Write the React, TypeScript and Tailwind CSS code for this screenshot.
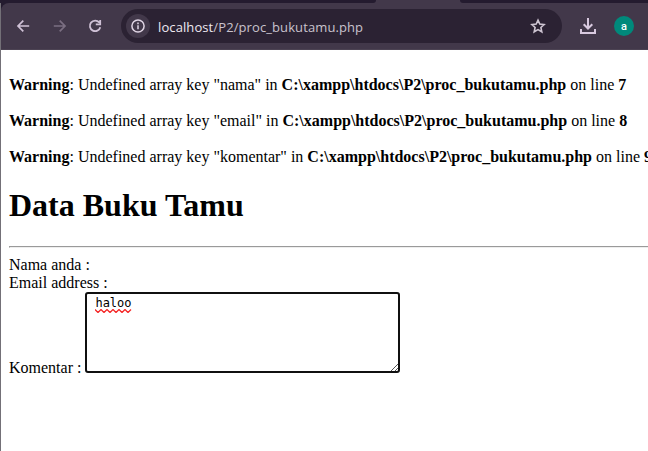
const warnings = [
  { key: 'nama', line: 7 },
  { key: 'email', line: 8 },
  { key: 'komentar', line: 9 },
];

function TabStrip() {
  return (
    <div className="flex h-[3px] justify-between bg-[#42384a]">
      <div className="w-[376px] rounded-br-[5px] bg-[#241b2f]" />
      <div className="w-[188px] rounded-bl-[5px] bg-[#241b2f]" />
    </div>
  );
}

function Toolbar() {
  return (
    <div className="bg-[#241b2f]">
      <div className="flex h-[47px] items-center rounded-tl-[8px] border-b border-[#4c4353] bg-[#42384a] pl-[15px]">
        <svg className="size-4" viewBox="0 0 16 16" fill="none" stroke="#cfc1d6" strokeWidth="1.7">
          <path d="M13.2 8H2M7.3 2.7L2 8L7.3 13.3" />
        </svg>
        <svg className="ml-5 size-4" viewBox="0 0 16 16" fill="none" stroke="#7b6f82" strokeWidth="1.7">
          <path d="M1.8 8H13M7.7 2.7L13 8L7.7 13.3" />
        </svg>
        <svg className="ml-[19px] size-4" viewBox="0 0 16 16" fill="none" stroke="#cfc1d6" strokeWidth="1.8">
          <path d="M12.2 4.4A5.3 5.3 0 1 0 13.3 9.2M13.2 2V6.3H8.8" />
        </svg>
        <div className="ml-[18px] flex h-[34px] w-[441px] items-center rounded-full bg-[#2b2233] pl-[5px] pr-4">
          <span className="flex size-6 items-center justify-center rounded-full bg-[#42384a]">
            <svg className="size-4" viewBox="0 0 16 16" fill="none" stroke="#e0d5e5" strokeWidth="1.5">
              <circle cx="8" cy="8" r="6.1" />
              <path d="M8 7.2V11.2M8 4.6V6.2" />
            </svg>
          </span>
          <span className="ml-2 whitespace-nowrap pt-px font-['Open_Sans',sans-serif] text-[13px] leading-5 tracking-[0.1px] text-[#c9c2cd]">
            <span className="text-[#eee9f1]">localhost</span>/P2/proc_bukutamu.php
          </span>
          <svg className="ml-auto size-4" viewBox="0 0 16 16" fill="none" stroke="#cec5d2" strokeWidth="1.6">
            <path d="M8 2.2L9.8 6.1L14.1 6.6L10.9 9.5L11.8 13.8L8 11.6L4.2 13.8L5.1 9.5L1.9 6.6L6.2 6.1Z" />
          </svg>
        </div>
        <svg className="ml-[17px] size-[18px]" viewBox="0 0 18 18" fill="none" stroke="#d8c9df" strokeWidth="2">
          <path d="M9 1V11.5M4.7 7.2L9 11.5L13.3 7.2M2 12V16H16V12" />
        </svg>
        <span className="ml-[17px] flex size-5 items-center justify-center rounded-full bg-[#00897b] font-[Roboto,sans-serif] text-[11px] font-medium leading-none text-white">
          a
        </span>
      </div>
    </div>
  );
}

function CommentBox() {
  return (
    <div className="ml-1 flex h-[81px] w-[315px] items-end justify-between rounded-[3px] border-2 border-[#101010] bg-white">
      <div className="flex flex-col self-start pl-[8px] pt-[2px]">
        <span className="font-['DejaVu_Sans_Mono',monospace] text-[12px] leading-[14px]">haloo</span>
        <svg className="-mt-px h-1 w-[37px]" viewBox="0 0 37 4" fill="none" stroke="#f52525" strokeWidth="1.3">
          <path d="M0 .5L3 3.5L6 .5L9 3.5L12 .5L15 3.5L18 .5L21 3.5L24 .5L27 3.5L30 .5L33 3.5L36 .5" />
        </svg>
      </div>
      <svg className="size-2" viewBox="0 0 8 8" stroke="#555" strokeWidth="1">
        <path d="M1 8L8 1M5 8L8 5" />
      </svg>
    </div>
  );
}

export default function App() {
  return (
    <div className="flex h-[451px] w-[648px] flex-col overflow-hidden bg-white text-black">
      <TabStrip />
      <div className="flex-1 border-l border-[#737077]">
        <Toolbar />
        <main className="pl-2 pt-[26px] font-['Liberation_Serif',serif] text-[16px] leading-[18px]">
          <div className="flex flex-col gap-[18px]">
            {warnings.map(({ key, line }) => (
              <p key={key} className="whitespace-nowrap">
                <b>Warning</b>: Undefined array key "{key}" in <b>C:\xampp\htdocs\P2\proc_bukutamu.php</b> on line <b>{line}</b>
              </p>
            ))}
          </div>
          <h1 className="mt-[21px] text-[32px] font-bold leading-[37px]">Data Buku Tamu</h1>
          <hr className="mt-[22px] h-[2px] border-b border-l border-t border-b-[#eee] border-l-[#9a9a9a] border-t-[#9a9a9a]" />
          <p className="mt-2">Nama anda :</p>
          <p>Email address :</p>
          <div className="flex items-end">
            <label className="-mb-1">Komentar :</label>
            <CommentBox />
          </div>
        </main>
      </div>
    </div>
  );
}
